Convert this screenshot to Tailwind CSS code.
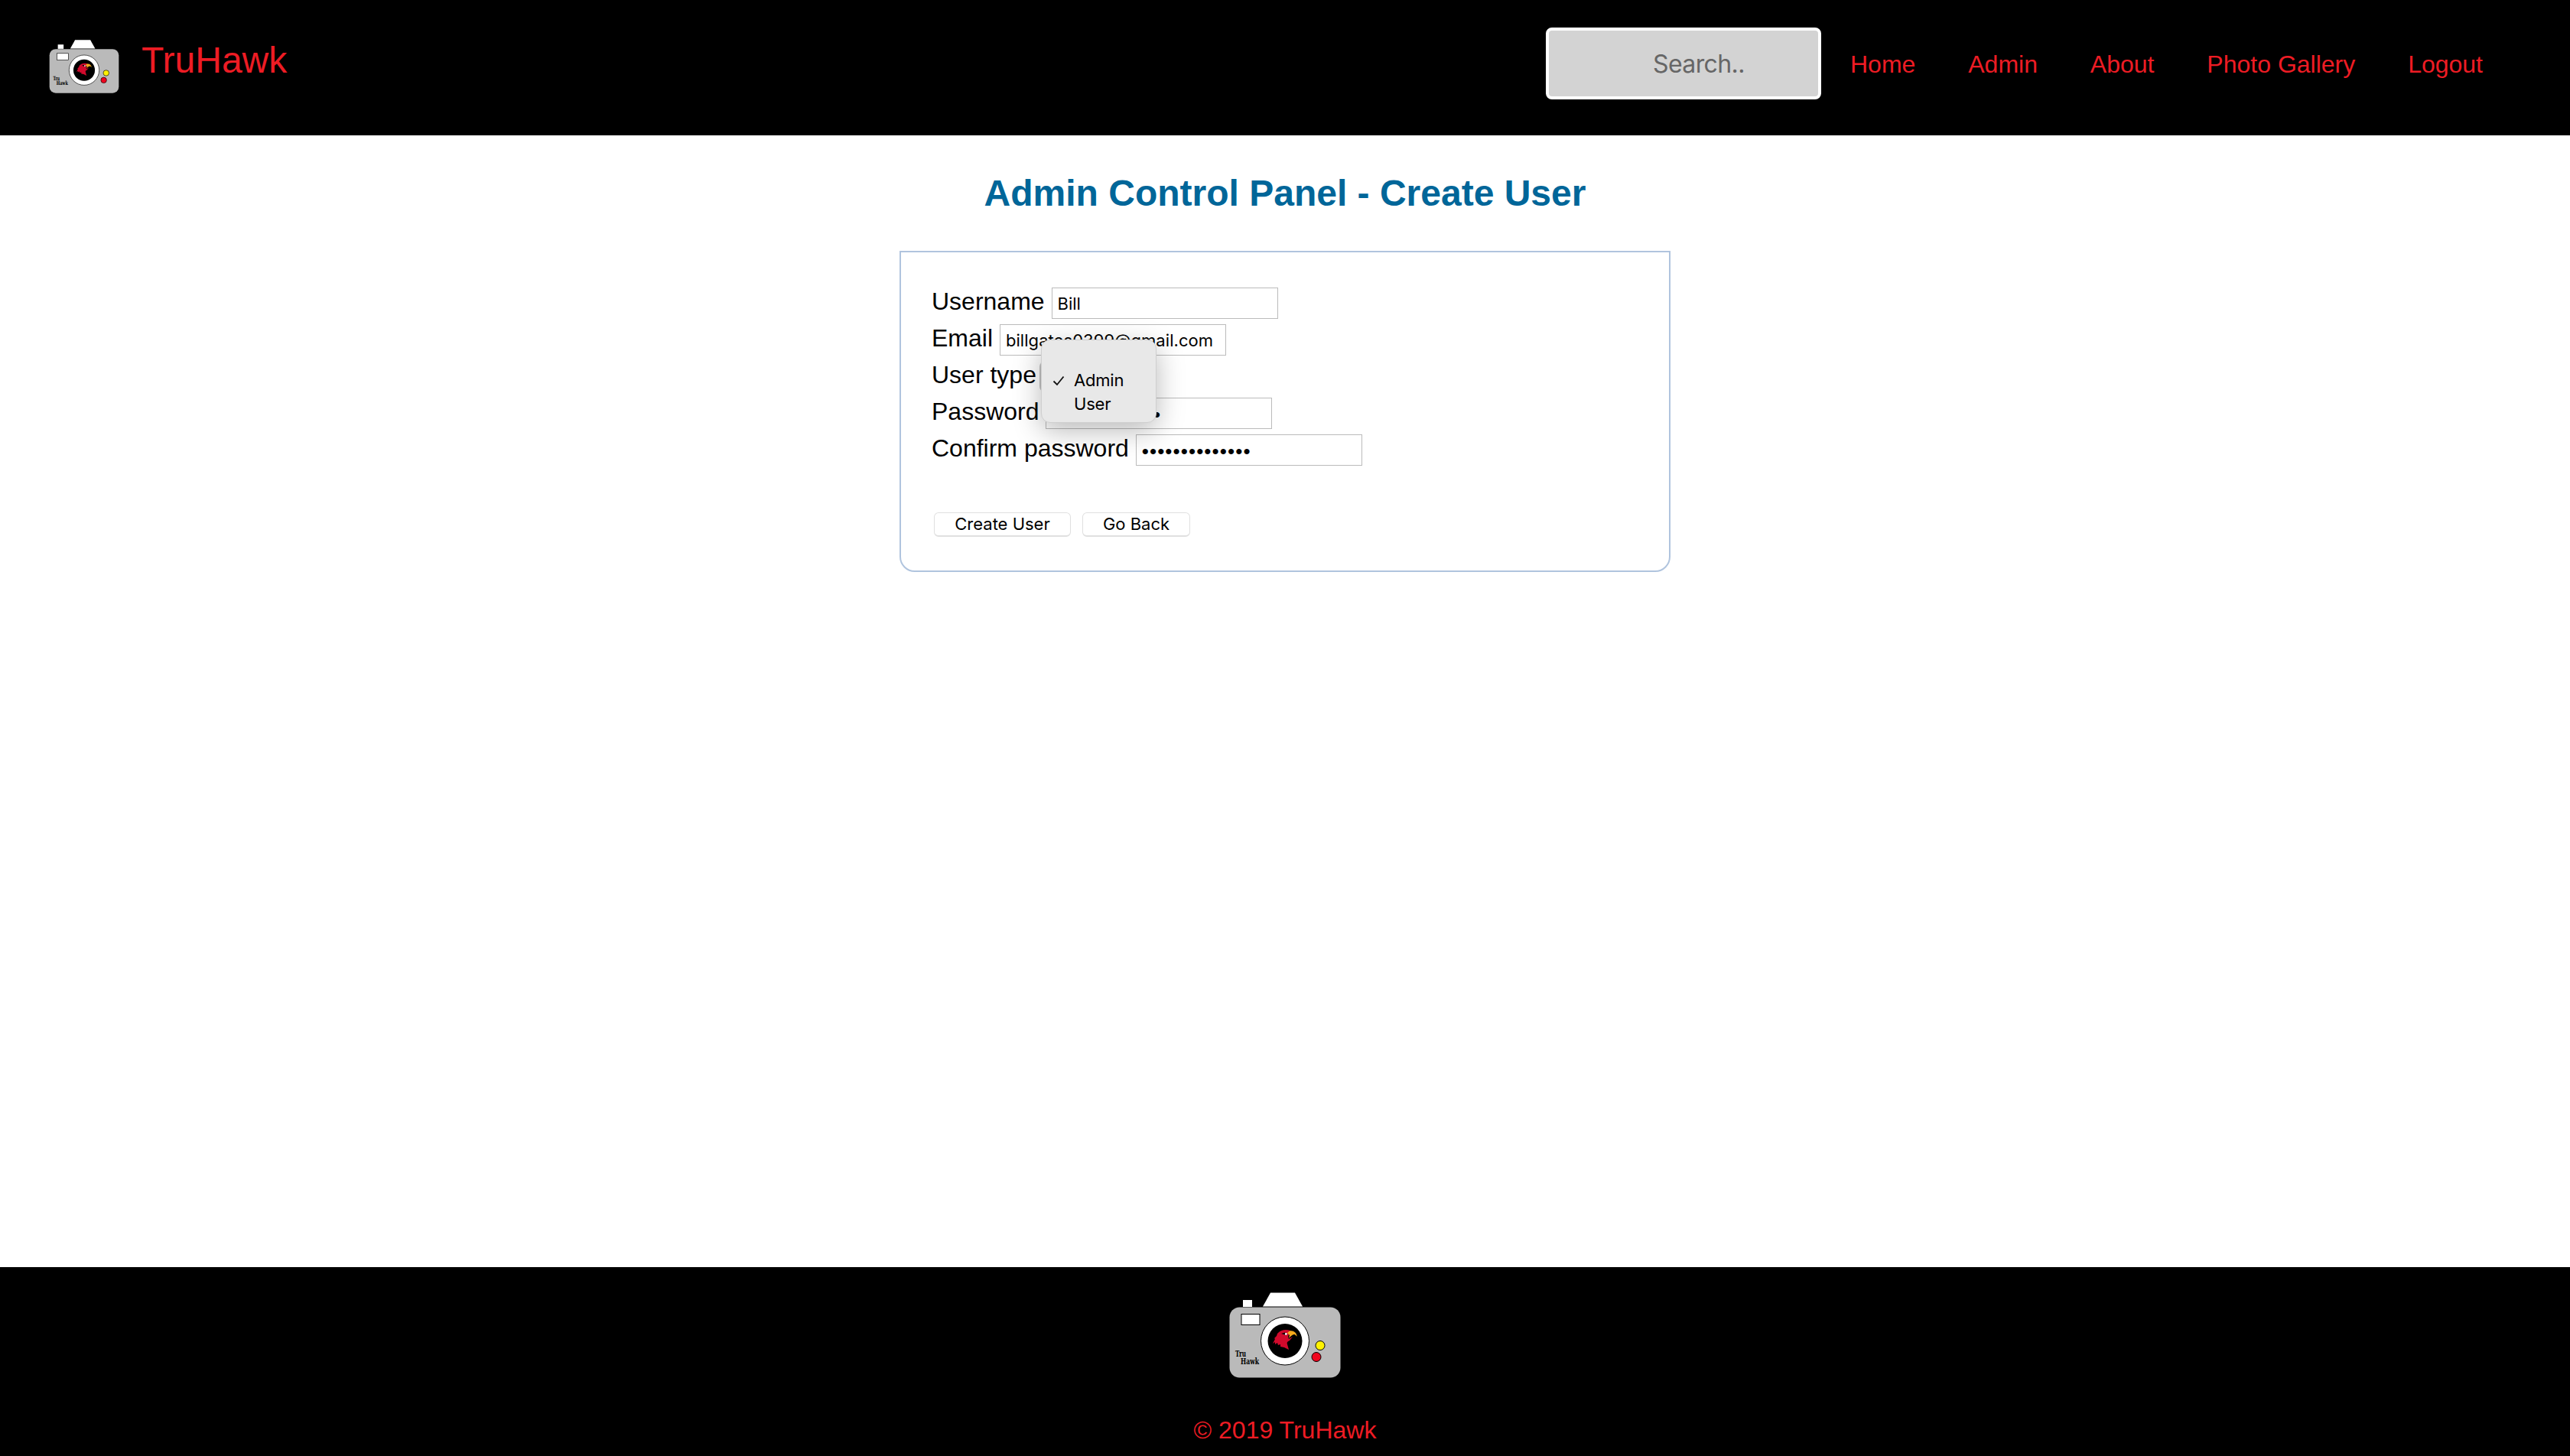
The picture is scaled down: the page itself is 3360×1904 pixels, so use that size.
<!DOCTYPE html>
<html lang="en"><head><meta charset="utf-8"><title>TruHawk - Create User</title>
<script src="https://cdn.jsdelivr.net/npm/@tailwindcss/browser@4"></script></head>
<body class="flex h-[1904px] w-[3360px] flex-col overflow-hidden bg-white font-['Liberation_Sans',sans-serif] text-[32px] leading-[48px] text-black">
<svg class="hidden">
  <symbol id="camera" viewBox="0 0 146 112">
    <rect x="18" y="10" width="12" height="9" fill="#fff"/>
    <path d="M54 .5h32l10 18H44z" fill="#fff"/>
    <rect x=".5" y="19.5" width="145" height="92" rx="13" fill="#bababa"/>
    <rect x="16" y="28.500" width="24" height="14" fill="#fff" stroke="#000"/>
    <circle cx="73" cy="63.500" r="31.500" fill="#fff" stroke="#000"/>
    <circle cx="73" cy="63.500" r="22.500" fill="#000"/>
    <path d="M80 50c-6-2-13-1-17 4l-1 3-3 3 1 1-3 6 3-2 0 3 3-2 1 3 3-1 0 3 5 1 6 3-2-7c-1-3 1-4 3-5l4-5-5 3-1-3 2-5z" fill="#d10a2c"/>
    <path d="M79 50.500c5-1 9 2 9.700 7.200l-3-2.700c-3 0-5 2-7.700 5l1-4-3-3z" fill="#f5a81c"/>
    <path d="M68 54l5-1.500 3 3-3 0z" fill="#000"/>
    <circle cx="74.300" cy="54.500" r="1.400" fill="#fff"/>
    <circle cx="119" cy="69.500" r="6" fill="#fff200" stroke="#000"/>
    <circle cx="114" cy="84.500" r="6" fill="#f0051e" stroke="#000"/>
    <text x="8" y="84" class="font-['DejaVu_Serif',serif] text-[11.500px] font-bold" textLength="14" lengthAdjust="spacingAndGlyphs">Tru</text>
    <text x="15" y="94" class="font-['DejaVu_Serif',serif] text-[11.500px] font-bold" textLength="24" lengthAdjust="spacingAndGlyphs">Hawk</text>
  </symbol>
</svg>
<header class="flex h-[177px] shrink-0 justify-between bg-black pl-16 pr-[114px] text-[#ed1c24]">
  <div class="flex items-start">
    <svg class="mt-[52px] h-[70px] w-[92px]" preserveAspectRatio="none"><use href="#camera"/></svg>
    <span class="ml-[29px] mt-[51px] text-[48px] leading-[56px]">TruHawk</span>
  </div>
  <nav class="mt-9 flex h-[94px] items-center">
    <div class="mr-[38px] flex h-[94px] w-[360px] items-center rounded-lg border-4 border-white bg-[#d3d3d3] pl-[136px] pt-[2px] font-['Inter',sans-serif] tracking-[-0.6px] text-[#666]">Search..</div>
    <div class="flex gap-[68.900px] pt-[2px]"><a>Home</a><a>Admin</a><a>About</a><a>Photo Gallery</a><a>Logout</a></div>
  </nav>
</header>
<main class="flex grow flex-col items-center">
  <h1 class="mt-12 text-[48px] font-bold leading-[56px] text-[#069]">Admin Control Panel - Create User</h1>
  <form class="mt-[47px] h-[420px] w-[1008px] rounded-b-[20px] border-2 border-[#b0c4de] pl-10 pt-[40px]">
    <div class="flex h-12 items-center gap-[8.900px]">Username<div class="mt-1 flex h-[41px] w-[296px] items-center border border-[#bbb] pl-[7px] pt-[2px] font-['Inter',sans-serif] text-[22px]">Bill</div></div>
    <div class="flex h-12 items-center gap-[8.900px]">Email<div class="mt-1 flex h-[41px] w-[296px] items-center border border-[#bbb] pl-[7px] pt-[2px] font-['Inter',sans-serif] text-[22px] tracking-[0.060px]">billgates0399@gmail.com</div></div>
    <div class="relative flex h-12 items-center">User type
      <div class="ml-1 mt-[5px] h-[41px] w-[150px] rounded-lg bg-[#c4c4c4]"></div>
      <div class="absolute left-[143px] top-[-22px] z-10 h-[109px] w-[151px] rounded-xl border border-[#cfcfcf] bg-[#e8e8e8] pl-[14px] pt-[37px] font-['Inter',sans-serif] text-[22px] leading-[31px] tracking-[-0.200px] shadow-[0_10px_36px_rgba(0,0,0,0.28)]">
        <div class="flex items-center"><svg class="mr-[12px] h-4 w-4" viewBox="0 0 16 16" fill="none" stroke="#111" stroke-width="1.800"><path d="M1.500 8.500l4.500 4.500L14.500 2.500"/></svg>Admin</div>
        <div class="pl-[28px]">User</div>
      </div>
    </div>
    <div class="flex h-12 items-center gap-[8.900px]">Password<div class="mt-1 flex h-[41px] w-[296px] items-center border border-[#bbb] pl-[7px] pt-[4px] text-[26px] tracking-[1.100px]">••••••••••••••</div></div>
    <div class="flex h-12 items-center gap-[8.900px]">Confirm password<div class="mt-1 flex h-[41px] w-[296px] items-center border border-[#bbb] pl-[7px] pt-[4px] text-[26px] tracking-[1.100px]">••••••••••••••</div></div>
    <div class="mt-[60px] flex gap-[15px] pl-[3px] font-['Inter',sans-serif] text-[22px] leading-[28px]">
      <button type="button" class="h-8 w-[179px] rounded-md border border-b-2 border-[#e0e0e0] pb-px">Create User</button>
      <button type="button" class="h-8 w-[141px] rounded-md border border-b-2 border-[#e0e0e0] pb-px">Go Back</button>
    </div>
  </form>
</main>
<footer class="flex h-[247px] shrink-0 flex-col items-center bg-black text-[#ed1c24]">
  <svg class="mt-[33px] h-[112px] w-[146px]"><use href="#camera"/></svg>
  <p class="mt-[44px]">© 2019 TruHawk</p>
</footer>
</body></html>
